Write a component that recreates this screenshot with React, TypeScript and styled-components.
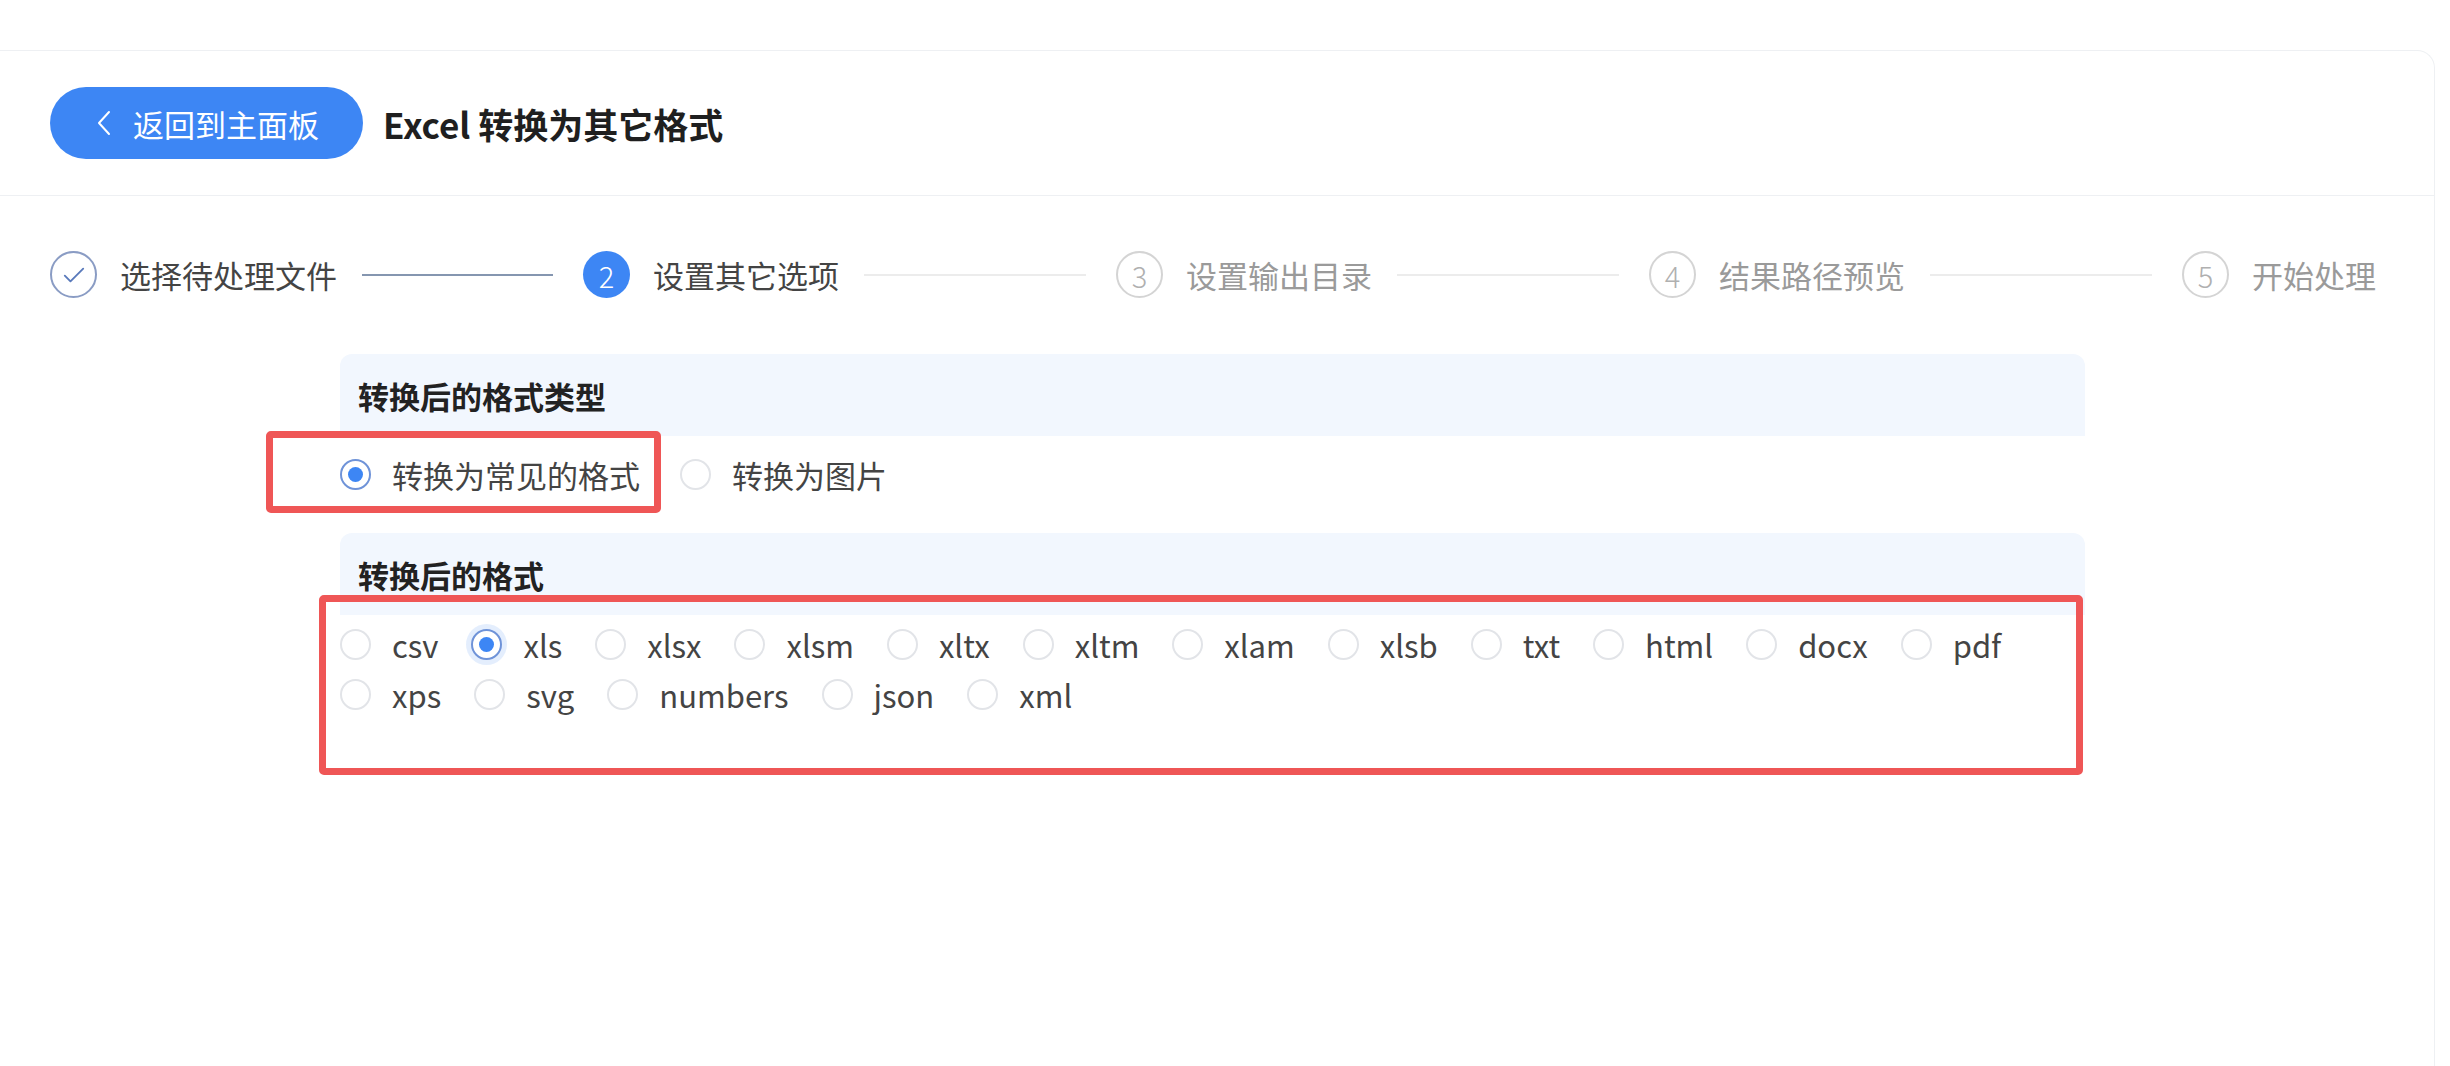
import React, { useState } from "react";
import styled, { createGlobalStyle, css } from "styled-components";

const GlobalStyle = createGlobalStyle`
  html, body {
    margin: 0;
    padding: 0;
    background: #ffffff;
    overflow: hidden;
  }
  body {
    font-family: "Noto Sans CJK SC", "Noto Sans", sans-serif;
    color: #3a3a3a;
  }
`;

const BLUE = "#3d86f4";

const Card = styled.div`
  margin-top: 50px;
  margin-right: 15px;
  height: calc(100vh - 51px);
  border: 1px solid #eef0f3;
  border-left: none;
  border-bottom: none;
  border-radius: 0 18px 0 0;
  background: #fff;
`;

const Header = styled.div`
  display: flex;
  align-items: center;
  gap: 20px;
  height: 144px;
  padding-left: 50px;
  border-bottom: 1px solid #eef0f3;
`;

const BackButton = styled.button`
  display: flex;
  align-items: center;
  gap: 22px;
  height: 72px;
  padding: 0 44px 0 47px;
  border: none;
  border-radius: 36px;
  background: ${BLUE};
  color: #fff;
  font-family: inherit;
  font-size: 31px;
  cursor: pointer;
`;

const Title = styled.h1`
  margin: 0;
  font-size: 35px;
  font-weight: 700;
  color: #1f1f1f;
`;

const Steps = styled.div`
  display: flex;
  align-items: center;
  padding: 55px 58px 0 50px;
`;

const Step = styled.div<{ $last?: boolean }>`
  display: flex;
  align-items: center;
  flex: ${(p) => (p.$last ? "none" : "1 1 0")};
  min-width: 0;
`;

const StepCircle = styled.div<{ $state: "done" | "active" | "wait" }>`
  box-sizing: border-box;
  width: 47px;
  height: 47px;
  flex: none;
  border-radius: 50%;
  display: flex;
  align-items: center;
  justify-content: center;
  font-size: 29px;
  font-weight: 300;
  ${(p) =>
    p.$state === "done" &&
    css`
      border: 2px solid #8a9cc4;
      color: #5a7abb;
    `}
  ${(p) =>
    p.$state === "active" &&
    css`
      background: ${BLUE};
      color: #fff;
    `}
  ${(p) =>
    p.$state === "wait" &&
    css`
      border: 2px solid #d4d4d4;
      color: #b0b0b0;
    `}
`;

const StepLabel = styled.span<{ $muted?: boolean }>`
  margin-left: 23px;
  font-size: 31px;
  white-space: nowrap;
  color: ${(p) => (p.$muted ? "#9a9a9a" : "#444")};
`;

const StepLine = styled.div<{ $done?: boolean }>`
  flex: 1;
  height: 2px;
  margin: 0 30px 0 25px;
  background: ${(p) => (p.$done ? "#8596b0" : "#ececec")};
`;

const Form = styled.div`
  position: relative;
  width: 1745px;
  margin: 56px 0 0 340px;
`;

const SectionTitle = styled.div`
  display: flex;
  align-items: center;
  height: 82px;
  padding-left: 18px;
  border-radius: 12px 12px 0 0;
  background: #f2f7fe;
  font-size: 31px;
  font-weight: 700;
  color: #222;
`;

const TypeRow = styled.div`
  display: flex;
  align-items: center;
  height: 76px;
  margin-bottom: 21px;
`;

const FormatGrid = styled.div`
  display: flex;
  flex-wrap: wrap;
  padding: 4px 0 60px;
`;

const Option = styled.label<{ $gap: number }>`
  display: flex;
  align-items: center;
  height: 50px;
  margin-right: ${(p) => p.$gap}px;
  cursor: pointer;
`;

const RadioDot = styled.span<{ $checked: boolean; $focus?: boolean }>`
  box-sizing: border-box;
  width: 31px;
  height: 31px;
  flex: none;
  border-radius: 50%;
  background: #fff;
  border: 2px solid ${(p) => (p.$checked ? "#6f93d8" : "#e2e4e8")};
  display: flex;
  align-items: center;
  justify-content: center;
  ${(p) =>
    p.$focus &&
    css`
      box-shadow: 0 0 0 5px rgba(61, 134, 244, 0.14);
    `}
  &::after {
    content: "";
    width: 15px;
    height: 15px;
    border-radius: 50%;
    background: ${BLUE};
    display: ${(p) => (p.$checked ? "block" : "none")};
  }
`;

const OptionText = styled.span`
  margin-left: 21px;
  font-size: 31px;
  color: #444;
  white-space: nowrap;
`;

// red highlight frames drawn over the form
const Highlight = styled.div<{ $left: number; $top: number; $w: number; $h: number }>`
  position: absolute;
  left: ${(p) => p.$left}px;
  top: ${(p) => p.$top}px;
  width: ${(p) => p.$w}px;
  height: ${(p) => p.$h}px;
  box-sizing: border-box;
  border: 7px solid #ef5656;
  border-radius: 5px;
  pointer-events: none;
`;

const BackArrow = () => (
  <svg width="14" height="26" viewBox="0 0 14 26" fill="none">
    <polyline points="12,2 2,13 12,24" stroke="#fff" strokeWidth="2" strokeLinecap="round" strokeLinejoin="round" />
  </svg>
);

const CheckIcon = () => (
  <svg width="34" height="34" viewBox="0 0 24 24" fill="none">
    <path d="M5.5 12.5l4 4L18.5 7.5" stroke="#5a7abb" strokeWidth="1.3" strokeLinecap="round" strokeLinejoin="round" />
  </svg>
);

const steps = ["选择待处理文件", "设置其它选项", "设置输出目录", "结果路径预览", "开始处理"];
const current = 1;

const formats = [
  "csv", "xls", "xlsx", "xlsm", "xltx", "xltm", "xlam", "xlsb", "txt", "html", "docx", "pdf",
  "xps", "svg", "numbers", "json", "xml",
];

export default function App() {
  const [kind, setKind] = useState("common");
  const [format, setFormat] = useState("xls");

  return (
    <>
      <GlobalStyle />
      <Card>
        <Header>
          <BackButton>
            <BackArrow />
            返回到主面板
          </BackButton>
          <Title>Excel 转换为其它格式</Title>
        </Header>

        <Steps>
          {steps.map((s, i) => {
            const state = i < current ? "done" : i === current ? "active" : "wait";
            const last = i === steps.length - 1;
            return (
              <Step key={s} $last={last}>
                <StepCircle $state={state}>{state === "done" ? <CheckIcon /> : i + 1}</StepCircle>
                <StepLabel $muted={state === "wait"}>{s}</StepLabel>
                {!last && <StepLine $done={i < current} />}
              </Step>
            );
          })}
        </Steps>

        <Form>
          <SectionTitle>转换后的格式类型</SectionTitle>
          <TypeRow>
            <Option $gap={40} onClick={() => setKind("common")}>
              <RadioDot $checked={kind === "common"} />
              <OptionText>转换为常见的格式</OptionText>
            </Option>
            <Option $gap={40} onClick={() => setKind("image")}>
              <RadioDot $checked={kind === "image"} />
              <OptionText>转换为图片</OptionText>
            </Option>
          </TypeRow>

          <SectionTitle>转换后的格式</SectionTitle>
          <FormatGrid>
            {formats.map((f) => (
              <Option key={f} $gap={33} onClick={() => setFormat(f)}>
                <RadioDot $checked={format === f} $focus={format === f} />
                <OptionText>{f}</OptionText>
              </Option>
            ))}
          </FormatGrid>

          <Highlight $left={-74} $top={77} $w={395} $h={82} />
          <Highlight $left={-21} $top={241} $w={1764} $h={180} />
        </Form>
      </Card>
    </>
  );
}
